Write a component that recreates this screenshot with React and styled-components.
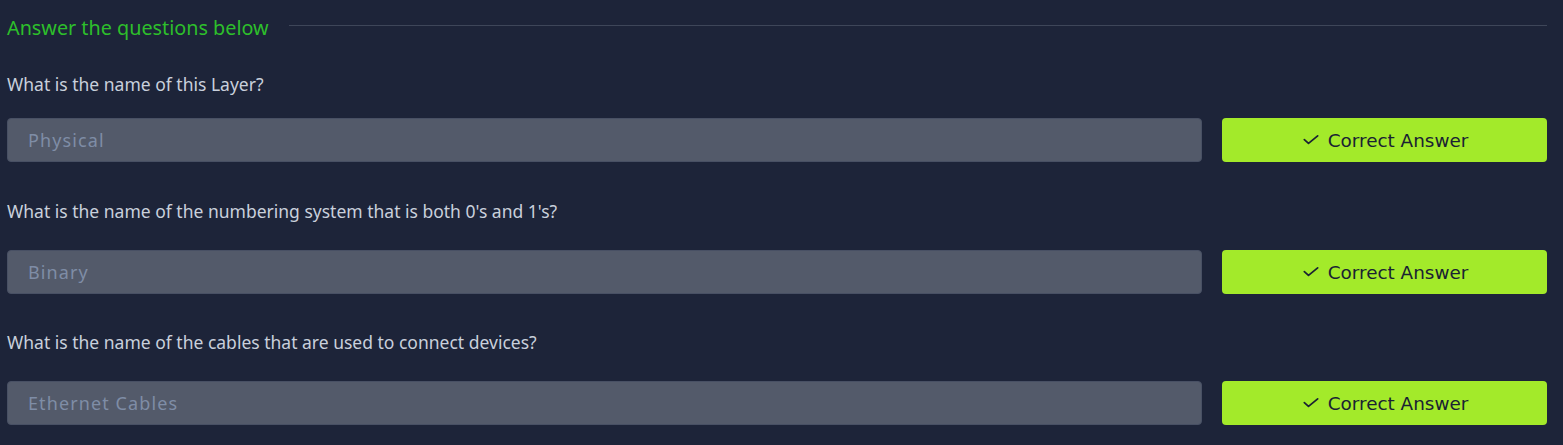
import styled, { createGlobalStyle } from 'styled-components';

const GlobalStyle = createGlobalStyle`
  html, body {
    margin: 0;
    padding: 0;
    background: #1d2439;
  }
`;

const questions = [
  { text: 'What is the name of this Layer?', answer: 'Physical', gap: 30, spacing: 22 },
  { text: "What is the name of the numbering system that is both 0's and 1's?", answer: 'Binary', gap: 37, spacing: 27 },
  { text: 'What is the name of the cables that are used to connect devices?', answer: 'Ethernet Cables', gap: 36, spacing: 27 },
];

function CheckIcon() {
  return (
    <svg width="20" height="20" viewBox="0 0 24 24" fill="none" stroke="currentColor" strokeWidth="2.1" strokeLinecap="round" strokeLinejoin="round">
      <polyline points="20 7 9 16 4 11.5" />
    </svg>
  );
}

function App() {
  return (
    <>
      <GlobalStyle />
      <Page>
        <Header>
          <Title>Answer the questions below</Title>
          <Rule />
        </Header>
        {questions.map((q) => (
          <Question key={q.answer} $gap={q.gap}>
            <Label>{q.text}</Label>
            <Row $spacing={q.spacing}>
              <AnswerField>{q.answer}</AnswerField>
              <CorrectButton>
                <CheckIcon />
                Correct Answer
              </CorrectButton>
            </Row>
          </Question>
        ))}
      </Page>
    </>
  );
}
export default App;

const Page = styled.div`
  width: 1563px;
  height: 445px;
  box-sizing: border-box;
  padding: 12px 16px 0 7px;
  background: #1d2439;
  font-family: 'Noto Sans', 'Open Sans', sans-serif;
`;

const Header = styled.div`
  display: flex;
  align-items: center;
  gap: 20px;
  height: 30px;
`;

const Title = styled.h3`
  margin: 0;
  font-size: 19.8px;
  font-weight: 400;
  color: #2dbf2b;
  white-space: nowrap;
`;

const Rule = styled.div`
  flex: 1;
  height: 1px;
  background: #3e4659;
  margin-top: -3px;
`;

const Question = styled.div`
  display: flex;
  flex-direction: column;
  padding-top: ${(p) => p.$gap}px;
`;

const Label = styled.p`
  margin: 0;
  font-size: 17.5px;
  line-height: 24px;
  color: #c9d0dc;
`;

const Row = styled.div`
  display: flex;
  gap: 20px;
  margin-top: ${(p) => p.$spacing}px;
`;

const AnswerField = styled.div`
  flex: 1;
  height: 44px;
  box-sizing: border-box;
  display: flex;
  align-items: center;
  padding: 0 20px;
  background: #535a6a;
  border: 1px solid #485064;
  border-radius: 4px;
  color: #7f8da6;
  font-size: 18px;
  letter-spacing: 1.1px;
`;

const CorrectButton = styled.div`
  width: 325px;
  height: 44px;
  display: flex;
  align-items: center;
  justify-content: center;
  gap: 7px;
  background: #a3ea2a;
  border-radius: 4px;
  color: #1a2233;
  font-family: 'DejaVu Sans', 'Noto Sans', sans-serif;
  font-size: 18.4px;
`;
